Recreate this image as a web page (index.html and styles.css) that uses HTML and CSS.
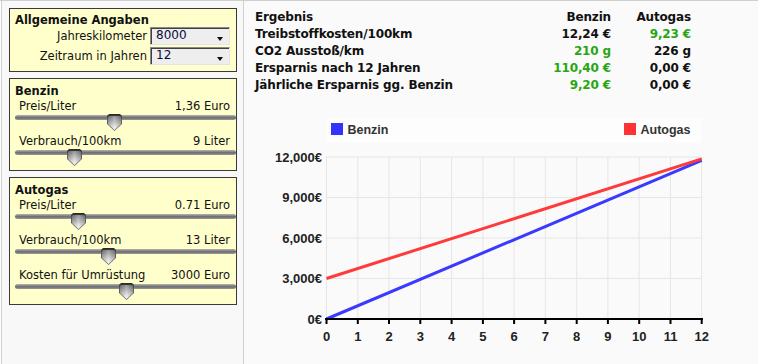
FILE: index.html
```html
<!DOCTYPE html>
<html lang="de">

<head>
  <meta charset="utf-8">
  <title>Autogas Rechner</title>
  <meta name="viewport" content="width=device-width, initial-scale=1">
  <link rel="stylesheet" href="styles.css">
</head>

<body>
  <div id="page">
    <div id="sidebar">
      <div class="box">
        <div class="boxTitle">Allgemeine Angaben</div>
        <div class="selRow">
          <span class="selLabel">Jahreskilometer</span>
          <div class="select">8000<span class="arrow"></span></div>
        </div>
        <div class="selRow">
          <span class="selLabel">Zeitraum in Jahren</span>
          <div class="select">12<span class="arrow"></span></div>
        </div>
      </div>

      <div class="box">
        <div class="boxTitle">Benzin</div>
        <div class="slider">
          <div class="sliderLabel"><span>Preis/Liter</span><span>1,36 Euro</span></div>
          <div class="track"><span class="thumb" style="left: 92px"></span></div>
        </div>
        <div class="slider">
          <div class="sliderLabel"><span>Verbrauch/100km</span><span>9 Liter</span></div>
          <div class="track"><span class="thumb" style="left: 52px"></span></div>
        </div>
      </div>

      <div class="box">
        <div class="boxTitle">Autogas</div>
        <div class="slider">
          <div class="sliderLabel"><span>Preis/Liter</span><span>0.71 Euro</span></div>
          <div class="track"><span class="thumb" style="left: 56px"></span></div>
        </div>
        <div class="slider">
          <div class="sliderLabel"><span>Verbrauch/100km</span><span>13 Liter</span></div>
          <div class="track"><span class="thumb" style="left: 86px"></span></div>
        </div>
        <div class="slider">
          <div class="sliderLabel"><span>Kosten für Umrüstung</span><span>3000 Euro</span></div>
          <div class="track"><span class="thumb" style="left: 104px"></span></div>
        </div>
      </div>
    </div>

    <div id="main">
      <div id="results">
        <span>Ergebnis</span><span class="num">Benzin</span><span class="num">Autogas</span>
        <span>Treibstoffkosten/100km</span><span class="num">12,24 €</span><span class="num good">9,23 €</span>
        <span>CO2 Ausstoß/km</span><span class="num good">210 g</span><span class="num">226 g</span>
        <span>Ersparnis nach 12 Jahren</span><span class="num good">110,40 €</span><span class="num">0,00 €</span>
        <span>Jährliche Ersparnis gg. Benzin</span><span class="num good">9,20 €</span><span class="num">0,00 €</span>
      </div>

      <svg id="chart" width="514" height="253" viewBox="0 0 514 253">
        <rect x="82.5" y="8" width="375" height="25" fill="#fdfdfd" />
        <rect x="87" y="13" width="12" height="12" fill="#3333ff" />
        <text class="legend" x="103.5" y="24">Benzin</text>
        <rect x="380" y="13" width="12" height="12" fill="#ff3333" />
        <text class="legend" x="396.5" y="24">Autogas</text>

        <g class="grid">
          <line x1="82.5" y1="47" x2="457.7" y2="47" />
          <line x1="82.5" y1="87.5" x2="457.7" y2="87.5" />
          <line x1="82.5" y1="128" x2="457.7" y2="128" />
          <line x1="82.5" y1="168.5" x2="457.7" y2="168.5" />
          <line x1="82.5" y1="47" x2="82.5" y2="209" />
          <line x1="113.8" y1="47" x2="113.8" y2="209" />
          <line x1="145" y1="47" x2="145" y2="209" />
          <line x1="176.3" y1="47" x2="176.3" y2="209" />
          <line x1="207.6" y1="47" x2="207.6" y2="209" />
          <line x1="238.9" y1="47" x2="238.9" y2="209" />
          <line x1="270.1" y1="47" x2="270.1" y2="209" />
          <line x1="301.4" y1="47" x2="301.4" y2="209" />
          <line x1="332.7" y1="47" x2="332.7" y2="209" />
          <line x1="363.9" y1="47" x2="363.9" y2="209" />
          <line x1="395.2" y1="47" x2="395.2" y2="209" />
          <line x1="426.5" y1="47" x2="426.5" y2="209" />
          <line x1="457.7" y1="47" x2="457.7" y2="209" />
        </g>

        <g class="yLabels">
          <text x="78" y="51.5">12,000€</text>
          <text x="78" y="92">9,000€</text>
          <text x="78" y="132.5">6,000€</text>
          <text x="78" y="173">3,000€</text>
          <text x="78" y="213.5">0€</text>
        </g>

        <line x1="82.5" y1="209" x2="457.7" y2="50.4" stroke="#3a3aff" stroke-width="3" />
        <line x1="82.5" y1="168.5" x2="457.7" y2="48.9" stroke="#ff3a3a" stroke-width="3" />

        <g class="axis">
          <line x1="81" y1="209" x2="459" y2="209" stroke-width="3" />
          <line x1="82.5" y1="209" x2="82.5" y2="214" />
          <line x1="113.8" y1="209" x2="113.8" y2="214" />
          <line x1="145" y1="209" x2="145" y2="214" />
          <line x1="176.3" y1="209" x2="176.3" y2="214" />
          <line x1="207.6" y1="209" x2="207.6" y2="214" />
          <line x1="238.9" y1="209" x2="238.9" y2="214" />
          <line x1="270.1" y1="209" x2="270.1" y2="214" />
          <line x1="301.4" y1="209" x2="301.4" y2="214" />
          <line x1="332.7" y1="209" x2="332.7" y2="214" />
          <line x1="363.9" y1="209" x2="363.9" y2="214" />
          <line x1="395.2" y1="209" x2="395.2" y2="214" />
          <line x1="426.5" y1="209" x2="426.5" y2="214" />
          <line x1="457.7" y1="209" x2="457.7" y2="214" />
        </g>

        <g class="xLabels">
          <text x="82.5" y="231">0</text>
          <text x="113.8" y="231">1</text>
          <text x="145" y="231">2</text>
          <text x="176.3" y="231">3</text>
          <text x="207.6" y="231">4</text>
          <text x="238.9" y="231">5</text>
          <text x="270.1" y="231">6</text>
          <text x="301.4" y="231">7</text>
          <text x="332.7" y="231">8</text>
          <text x="363.9" y="231">9</text>
          <text x="395.2" y="231">10</text>
          <text x="426.5" y="231">11</text>
          <text x="457.7" y="231">12</text>
        </g>
      </svg>
    </div>
  </div>
</body>

</html>
```

FILE: styles.css
```css
* {
  box-sizing: border-box;
}

body {
  margin: 0;
  background-color: #fff;
  color: #111;
  font-family: "DejaVu Sans", Verdana, sans-serif;
  overflow: hidden;
}

#page {
  display: flex;
  height: 364px;
  border-top: 1px solid #cfcfcf;
}

#sidebar {
  width: 243px;
  margin-left: 1px;
  padding: 7px 0 0 7px;
  border-left: 1px solid #cfcfcf;
  border-right: 1px solid #cfcfcf;
  background-color: #f8f8f8;
}

.box {
  width: 228px;
  margin-bottom: 6px;
  padding: 5px 0 0 5px;
  border: 1px solid #3a3a3a;
  background-color: #ffffcc;
}

.box:first-child {
  padding-bottom: 6px;
}

.boxTitle {
  font-size: 11.5px;
  font-weight: bold;
  line-height: 14px;
  margin-bottom: 2px;
}

.box:first-child .boxTitle {
  line-height: 13px;
  margin-bottom: 0;
}

/* selects */
.selRow {
  display: flex;
  justify-content: flex-end;
  align-items: center;
  gap: 3px;
  padding-right: 6px;
  margin-bottom: 2px;
  font-size: 11.5px;
}

.selRow:last-child {
  margin-bottom: 0;
}

.select {
  position: relative;
  width: 80px;
  height: 18px;
  padding-left: 5px;
  line-height: 15px;
  font-size: 12px;
  color: #0a0a3c;
  background-color: #eeeeee;
  border-top: 1px solid #8a8a8a;
  border-left: 1px solid #8a8a8a;
  border-right: 1px solid #e4e4e4;
  border-bottom: 1px solid #e4e4e4;
  box-shadow: inset 1px 1px 0 #404040;
}

.arrow {
  position: absolute;
  left: 66px;
  top: 9px;
  border-left: 3.5px solid transparent;
  border-right: 3.5px solid transparent;
  border-top: 4px solid #111;
}

/* sliders */
.sliderLabel {
  display: flex;
  justify-content: space-between;
  padding: 0 6px 0 4px;
  font-size: 11.5px;
  line-height: 13px;
}

.track {
  position: relative;
  height: 22px;
}

.track::before {
  content: "";
  position: absolute;
  left: 0;
  right: 0;
  top: 2px;
  height: 5px;
  border-radius: 3px;
  background: linear-gradient(#b4b4b4, #6c6c6c 55%, #9a9a9a);
}

.thumb {
  position: absolute;
  top: 1px;
  width: 15px;
  height: 17px;
  clip-path: polygon(0 2px, 2px 0, 13px 0, 15px 2px, 15px 10px, 7.5px 17px, 0 10px);
  background: linear-gradient(#262626, #5a5a5a 30%, #6e6e6e);
}

.thumb::after {
  content: "";
  position: absolute;
  left: 1px;
  top: 2px;
  width: 13px;
  height: 14px;
  clip-path: polygon(0 1px, 1px 0, 12px 0, 13px 1px, 13px 8px, 6.5px 14px, 0 8px);
  background: linear-gradient(90deg, rgba(0, 0, 0, .18), rgba(255, 255, 255, .2) 50%, rgba(0, 0, 0, .18)), linear-gradient(#7c7c7c, #a8a8a8 30%, #dedede 70%, #f4f4f4);
}

/* right side */
#main {
  flex: 1;
  background-color: #fafafa;
}

#results {
  display: grid;
  grid-template-columns: 276px 80px 80px;
  padding: 8px 0 0 11px;
  font-size: 12px;
  font-weight: bold;
  letter-spacing: -0.15px;
  line-height: 17px;
}

.num {
  text-align: right;
}

.good {
  color: #28a514;
}

#chart {
  display: block;
  margin-top: 16px;
  font-family: "Liberation Sans", Arial, sans-serif;
  font-weight: bold;
  font-size: 13px;
}

.legend {
  fill: #333;
  font-size: 12.5px;
}

.grid line {
  stroke: #e6e6e6;
  stroke-width: 1;
}

.yLabels text {
  fill: #222;
  text-anchor: end;
}

.xLabels text {
  fill: #222;
  text-anchor: middle;
}

.axis line {
  stroke: #000;
  stroke-width: 2;
}
```
